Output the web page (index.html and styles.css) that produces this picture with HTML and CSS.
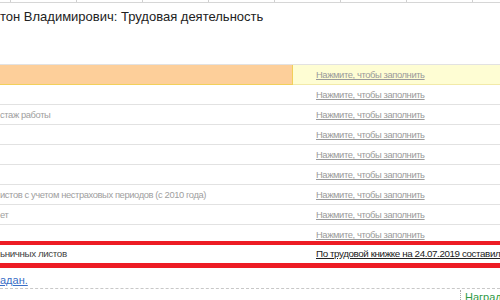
FILE: index.html
```html
<!DOCTYPE html>
<html lang="ru">
<head>
    <meta charset="UTF-8" />
    <title>Трудовая деятельность</title>
    <link rel="stylesheet" href="styles.css">
</head>
<body>
    <div class="toolbar">
        <span class="tool first"></span>
        <span class="tool"></span>
        <span class="tool"></span>
        <span class="tool"></span>
        <span class="tool"></span>
        <span class="tool"></span>
        <span class="tool"></span>
        <span class="tool"></span>
    </div>

    <h1 class="title">тон Владимирович: Трудовая деятельность</h1>

    <div class="grid">
        <div class="row active">
            <div class="cell name"></div>
            <div class="cell value"><a href="#">Нажмите, чтобы заполнить</a></div>
        </div>
        <div class="row">
            <div class="cell name"></div>
            <div class="cell value"><a href="#">Нажмите, чтобы заполнить</a></div>
        </div>
        <div class="row">
            <div class="cell name">стаж работы</div>
            <div class="cell value"><a href="#">Нажмите, чтобы заполнить</a></div>
        </div>
        <div class="row">
            <div class="cell name"></div>
            <div class="cell value"><a href="#">Нажмите, чтобы заполнить</a></div>
        </div>
        <div class="row">
            <div class="cell name"></div>
            <div class="cell value"><a href="#">Нажмите, чтобы заполнить</a></div>
        </div>
        <div class="row">
            <div class="cell name"></div>
            <div class="cell value"><a href="#">Нажмите, чтобы заполнить</a></div>
        </div>
        <div class="row">
            <div class="cell name">истов с учетом нестраховых периодов (с 2010 года)</div>
            <div class="cell value"><a href="#">Нажмите, чтобы заполнить</a></div>
        </div>
        <div class="row">
            <div class="cell name">ет</div>
            <div class="cell value"><a href="#">Нажмите, чтобы заполнить</a></div>
        </div>
        <div class="row short">
            <div class="cell name"></div>
            <div class="cell value"><a href="#">Нажмите, чтобы заполнить</a></div>
        </div>
        <div class="row marked">
            <div class="cell name">ьничных листов</div>
            <div class="cell value"><a href="#" class="filled">По трудовой книжке на 24.07.2019 составил</a></div>
        </div>
    </div>

    <div class="note"><a href="#">адан.</a></div>

    <div class="footer">
        <a href="#" class="awards">Награды</a>
    </div>
</body>
</html>
```

FILE: styles.css
```css
body {
    margin: 0;
    background: #fff;
    font-family: 'Liberation Sans', Arial, sans-serif;
    color: #333;
    overflow: hidden;
}

.toolbar {
    display: flex;
    height: 2px;
    border-bottom: 1px solid #d6d6d6;
}

.tool {
    width: 65px;
    flex: none;
    border-right: 1px solid #d0d0d0;
}

.tool.first {
    width: 10px;
}

.title {
    margin: 7px 0 0;
    height: 54px;
    font-size: 13px;
    font-weight: normal;
    color: #222;
    line-height: 14px;
}

.grid {
    border-top: 1px solid #e2e2e2;
}

.row {
    display: grid;
    grid-template-columns: 293px 1fr;
    box-sizing: border-box;
    height: 20px;
    border-bottom: 1px solid #e2e2e2;
    font-size: 9.4px;
    letter-spacing: -0.4px;
    line-height: 19px;
}

.row.active {
    border-bottom: none;
}

.active .name {
    background: #fdcf9a;
    border: 1px solid #f2cf5a;
    border-top: none;
    border-left: none;
}

.active .value {
    background: #fefdd3;
    border-bottom: 1px solid #f2eaa8;
}

.cell {
    white-space: nowrap;
    overflow: hidden;
}

.name {
    color: #a0a0a0;
}

.value {
    padding-left: 23px;
}

.value a {
    color: #9a9a9a;
    text-decoration: underline;
}

.row.short {
    height: 16px;
    border-bottom: none;
}

.row.marked {
    height: 27px;
    line-height: 18px;
    font-size: 9.8px;
    border-top: 4px solid #ed1c24;
    border-bottom: 5px solid #ed1c24;
}

.marked .name {
    color: #444;
}

.marked .value a.filled {
    color: #222;
}

.note {
    padding: 5px 0 1px;
    height: 14px;
    font-size: 11px;
    line-height: 14px;
    border-bottom: 1px dashed #c8c8c8;
}

.note a {
    color: #3a6fc6;
}

.footer {
    display: flex;
    justify-content: flex-end;
    padding-top: 1px;
    font-size: 11px;
    line-height: 14px;
}

.awards {
    color: #2f9a46;
    text-decoration: none;
    padding-left: 4px;
    border-left: 1px dotted #aaa;
    margin-right: -5px;
    width: 40px;
}
```
